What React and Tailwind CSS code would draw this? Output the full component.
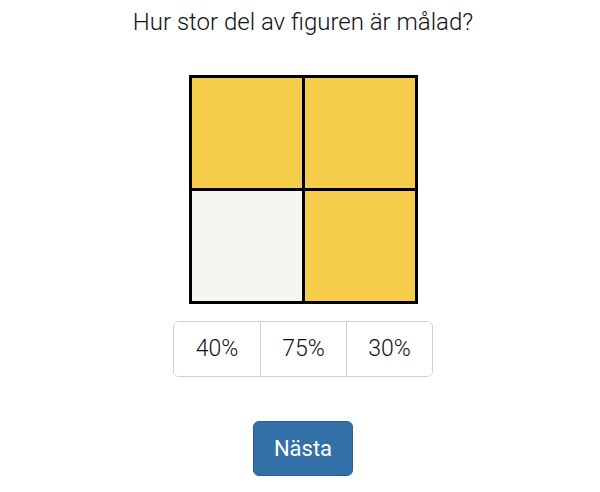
import React from "react";

const YELLOW = "#F6CD4A";
const BLANK = "#F6F5F1";

function Figure() {
  const cells = [
    { x: 1.5, y: 1.5, fill: YELLOW },
    { x: 114.5, y: 1.5, fill: YELLOW },
    { x: 1.5, y: 114.5, fill: BLANK },
    { x: 114.5, y: 114.5, fill: YELLOW },
  ];
  return (
    <svg width="229" height="229" viewBox="0 0 229 229">
      {cells.map((c, i) => (
        <rect key={i} x={c.x} y={c.y} width="113" height="113" fill={c.fill} stroke="#000" strokeWidth="3" />
      ))}
    </svg>
  );
}

export default function App() {
  const options = ["40%", "75%", "30%"];

  return (
    <div className="min-h-[492px] bg-white pl-[6px] flex flex-col items-center font-['Roboto',sans-serif] text-[#111]">
      <h1 className="mt-[6px] text-[24px] leading-[32px] font-light">Hur stor del av figuren är målad?</h1>

      <div className="mt-[37px]">
        <Figure />
      </div>

      <div className="mt-[17px] flex border border-[#cfcfcf] rounded-[6px] overflow-hidden">
        {options.map((o, i) => (
          <button
            key={o}
            className={`w-[86px] h-[54px] text-[23px] font-light bg-white ${i > 0 ? "border-l border-[#cfcfcf]" : ""}`}
          >
            {o}
          </button>
        ))}
      </div>

      <button className="mt-[44px] w-[100px] h-[55px] rounded-[6px] bg-[#3370a8] border border-[#2b5f91] text-white text-[22px]">
        Nästa
      </button>
    </div>
  );
}
